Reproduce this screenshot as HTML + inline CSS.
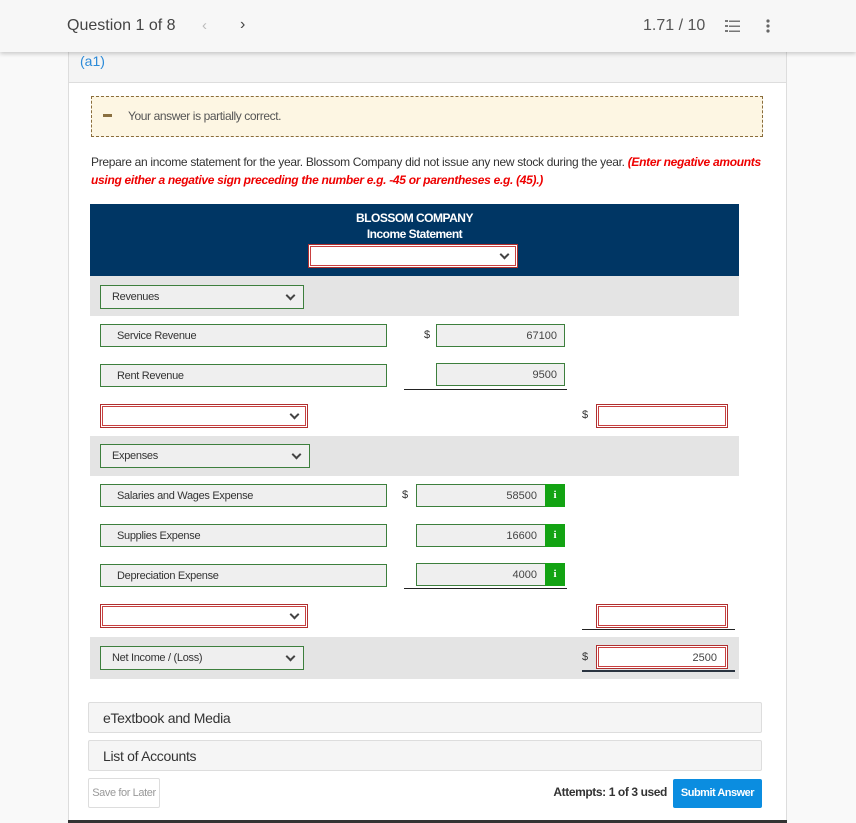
<!DOCTYPE html>
<html><head><style>
*{box-sizing:border-box;margin:0;padding:0}
body{width:856px;height:823px;background:#f9f9f9;font-family:"Liberation Sans",sans-serif;position:relative;overflow:hidden;color:#333}
.a{position:absolute}
.top{left:0;top:0;width:856px;height:52px;background:#f7f7f7;box-shadow:0 2px 4px rgba(0,0,0,.18);z-index:2}
.panel{left:68px;top:52px;width:719px;height:771px;background:#fff;border-left:1px solid #ddd;border-right:1px solid #ddd}
.lbl{background:#efefef;border:1px solid #3d7f3d;font-size:11px;letter-spacing:-.3px;color:#333;padding-left:16px;line-height:22px;height:23px}
.sel{background:#efefef;border:1px solid #3d7f3d;font-size:11px;letter-spacing:-.3px;padding-left:11px;line-height:22px;height:24px}
.red{background:#fff;border:1px solid #b03030;box-shadow:inset 0 0 0 1px #fff,inset 0 0 0 2px #c94040;height:24px}
.amt{background:#efefef;border:1px solid #3d7f3d;font-size:11px;text-align:right;padding-right:7px;line-height:22px;height:23px;color:#444}
.chev{position:absolute;right:9px;top:6px;width:7px;height:7px;border-right:2px solid #444;border-bottom:2px solid #444;transform:rotate(45deg)}
.gi{position:absolute;right:-1px;top:-1px;width:20px;height:23px;background:#13a313;color:#fff;font-weight:bold;font-size:11px;text-align:center;line-height:23px;font-family:"Liberation Serif",serif}
.dl{font-size:11px;color:#333}
.ul{height:1px;background:#222}
.gray{background:#e4e4e4;left:90px;width:649px}
.acc{left:88px;width:674px;height:31px;background:#f5f5f5;border:1px solid #ddd;border-radius:2px;font-size:14px;color:#333;padding-left:14px;line-height:30px;letter-spacing:-.3px}
</style></head><body>
<div class="a top">
 <div class="a" style="left:67px;top:17px;font-size:16px;color:#444">Question 1 of 8</div>
 <div class="a" style="left:202px;top:17px;font-size:15px;color:#bbb">&lsaquo;</div>
 <div class="a" style="left:240px;top:16px;font-size:16px;color:#444">&rsaquo;</div>
 <div class="a" style="left:643px;top:17px;font-size:16px;color:#555">1.71 / 10</div>
 <svg class="a" style="left:725px;top:19px" width="16" height="14"><g fill="#777"><rect x="0" y="1" width="3" height="2"/><rect x="0" y="6" width="3" height="2"/><rect x="0" y="11" width="3" height="2"/><rect x="4" y="1.5" width="11" height="1.5"/><rect x="4" y="6.5" width="11" height="1.5"/><rect x="4" y="11.5" width="11" height="1.5"/></g></svg>
 <svg class="a" style="left:766px;top:19px" width="4" height="14"><g fill="#666"><circle cx="2" cy="2" r="1.6"/><circle cx="2" cy="7" r="1.6"/><circle cx="2" cy="12" r="1.6"/></g></svg>
</div>
<div class="a panel"></div>
<div class="a" style="left:69px;top:52px;width:717px;height:31px;background:#f4f4f4;border-bottom:1px solid #ddd"></div>
<div class="a" style="left:80px;top:53px;font-size:14px;color:#2b8ad8">(a1)</div>
<div class="a" style="left:91px;top:96px;width:672px;height:41px;background:#fdf6e3;border:1px dashed #8a6d3b"></div>
<div class="a" style="left:103px;top:114px;width:9px;height:3px;background:#8a7040"></div>
<div class="a" style="left:128px;top:109px;font-size:12px;color:#555;letter-spacing:-.4px">Your answer is partially correct.</div>
<div class="a" style="left:91px;top:153px;width:680px;font-size:12px;line-height:18px;letter-spacing:-.3px;color:#333">Prepare an income statement for the year. Blossom Company did not issue any new stock during the year. <i style="color:#e00;font-weight:bold">(Enter negative amounts using either a negative sign preceding the number e.g. -45 or parentheses e.g. (45).)</i></div>
<div class="a" style="left:90px;top:204px;width:649px;height:72px;background:#003664"></div>
<div class="a" style="left:90px;top:210px;width:649px;text-align:center;color:#fff;font-weight:bold;font-size:12px;letter-spacing:-.5px;line-height:16px">BLOSSOM COMPANY<br>Income Statement</div>
<div class="a red" style="left:308px;top:244px;width:210px"><div class="chev"></div></div>

<div class="a gray" style="top:276px;height:40px"></div>
<div class="a sel" style="left:100px;top:285px;width:204px">Revenues<div class="chev"></div></div>
<div class="a lbl" style="left:100px;top:324px;width:287px">Service Revenue</div>
<div class="a dl" style="left:424px;top:329px">$</div>
<div class="a amt" style="left:436px;top:324px;width:129px">67100</div>
<div class="a lbl" style="left:100px;top:364px;width:287px">Rent Revenue</div>
<div class="a amt" style="left:436px;top:363px;width:129px">9500</div>
<div class="a ul" style="left:404px;top:389px;width:163px"></div>
<div class="a red" style="left:100px;top:404px;width:208px"><div class="chev"></div></div>
<div class="a dl" style="left:582px;top:409px">$</div>
<div class="a red" style="left:596px;top:404px;width:132px"></div>

<div class="a gray" style="top:436px;height:40px"></div>
<div class="a sel" style="left:100px;top:444px;width:210px">Expenses<div class="chev"></div></div>
<div class="a lbl" style="left:100px;top:484px;width:287px">Salaries and Wages Expense</div>
<div class="a dl" style="left:402px;top:489px">$</div>
<div class="a amt" style="left:416px;top:484px;width:149px;padding-right:27px">58500<div class="gi">i</div></div>
<div class="a lbl" style="left:100px;top:524px;width:287px">Supplies Expense</div>
<div class="a amt" style="left:416px;top:524px;width:149px;padding-right:27px">16600<div class="gi">i</div></div>
<div class="a lbl" style="left:100px;top:564px;width:287px">Depreciation Expense</div>
<div class="a amt" style="left:416px;top:563px;width:149px;padding-right:27px">4000<div class="gi">i</div></div>
<div class="a ul" style="left:404px;top:588px;width:163px"></div>
<div class="a red" style="left:100px;top:604px;width:208px"><div class="chev"></div></div>
<div class="a red" style="left:596px;top:604px;width:132px"></div>
<div class="a ul" style="left:582px;top:629px;width:153px"></div>

<div class="a gray" style="top:637px;height:42px"></div>
<div class="a sel" style="left:100px;top:646px;width:204px">Net Income / (Loss)<div class="chev"></div></div>
<div class="a dl" style="left:582px;top:651px">$</div>
<div class="a red" style="left:596px;top:645px;width:132px;font-size:11px;text-align:right;padding-right:10px;line-height:24px;color:#444">2500</div>
<div class="a" style="left:582px;top:670px;width:153px;height:2px;background:#2a3440"></div>

<div class="a acc" style="top:702px">eTextbook and Media</div>
<div class="a acc" style="top:740px">List of Accounts</div>
<div class="a" style="left:88px;top:778px;width:72px;height:30px;border:1px solid #ddd;border-radius:2px;background:#fff;font-size:11px;color:#999;text-align:center;line-height:28px;letter-spacing:-.4px">Save for Later</div>
<div class="a" style="left:540px;top:785px;width:127px;text-align:right;font-size:12px;font-weight:bold;color:#333;letter-spacing:-.4px">Attempts: 1 of 3 used</div>
<div class="a" style="left:673px;top:779px;width:89px;height:29px;background:#0b8de0;border-radius:2px;color:#fff;font-size:11px;font-weight:bold;text-align:center;line-height:29px;letter-spacing:-.5px">Submit Answer</div>
<div class="a" style="left:68px;top:820px;width:719px;height:3px;background:#333"></div>
</body></html>
